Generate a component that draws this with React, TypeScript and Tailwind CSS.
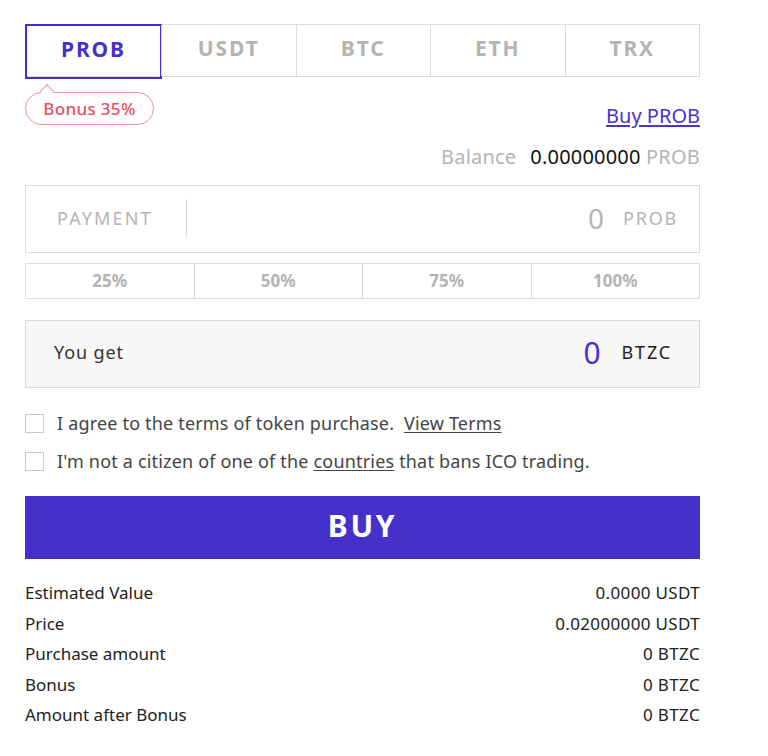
const tabs = ["PROB", "USDT", "BTC", "ETH", "TRX"];
const percents = ["25%", "50%", "75%", "100%"];
const stats: [string, string][] = [
  ["Estimated Value", "0.0000 USDT"],
  ["Price", "0.02000000 USDT"],
  ["Purchase amount", "0 BTZC"],
  ["Bonus", "0 BTZC"],
  ["Amount after Bonus", "0 BTZC"],
];

function Checkbox() {
  return <span className="h-[19px] w-[19px] shrink-0 border border-[#c8c8c8] bg-white" />;
}

export default function App() {
  return (
    <div className="min-h-[756px] bg-white font-['Noto_Sans',sans-serif]">
      <div className="ml-[25px] w-[675px] pt-[24px]">
        {/* currency tabs */}
        <div className="flex h-[53px] border border-[#dcdcdc]">
          {tabs.map((t, i) =>
            i === 0 ? (
              <div
                key={t}
                className="-m-px flex h-[55px] w-[137px] items-center justify-center border-2 border-[#4431ca] pb-[3px] text-[21px] font-bold tracking-[0.09em] text-[#4431ca]"
              >
                {t}
              </div>
            ) : (
              <div
                key={t}
                className="flex flex-1 items-center justify-center border-l border-[#dcdcdc] pb-[3px] text-[21px] font-bold tracking-[0.09em] text-[#b4b4b4] first:border-l-0"
              >
                {t}
              </div>
            )
          )}
        </div>

        <div className="flex items-start justify-between">
          <div className="relative mt-[15px]">
            <span className="absolute left-[17px] top-[-6px] h-[10px] w-[10px] rotate-45 border-l-[1.5px] border-t-[1.5px] border-[#f4909c] bg-white" />
            <div className="flex h-[33px] w-[129px] items-center justify-center rounded-full border-[1.5px] border-[#f4909c] bg-white text-[17px] font-medium tracking-[0.02em] text-[#ec4d5d]">
              <span className="relative">Bonus 35%</span>
            </div>
          </div>
          <a className="mt-[26px] text-[20px] leading-[26px] text-[#4a31d0] underline underline-offset-2">Buy PROB</a>
        </div>

        <div className="mt-[15px] flex items-center justify-end gap-[14px] text-[20px] leading-[26px] tracking-[0.01em]">
          <span className="text-[#b4b4b4]">Balance</span>
          <span>
            <span className="text-[#111]">0.00000000</span> <span className="text-[#b4b4b4]">PROB</span>
          </span>
        </div>

        {/* payment */}
        <div className="mt-[15px] flex h-[68px] items-center border border-[#dcdcdc] pb-[2px] pl-[31px] pr-[21px]">
          <span className="text-[18px] tracking-[0.12em] text-[#b4b4b4]">PAYMENT</span>
          <span className="ml-[33px] h-[38px] w-px bg-[#dcdcdc]" />
          <span className="ml-auto text-[28px] leading-none text-[#b4b4b4]">0</span>
          <span className="ml-[19px] text-[18px] tracking-[0.1em] text-[#b4b4b4]">PROB</span>
        </div>

        <div className="mt-[10px] flex h-[36px] border border-[#dcdcdc]">
          {percents.map((p) => (
            <div
              key={p}
              className="flex flex-1 items-center justify-center border-l border-[#dcdcdc] text-[17px] font-bold text-[#b4b4b4] first:border-l-0"
            >
              {p}
            </div>
          ))}
        </div>

        {/* you get */}
        <div className="mt-[21px] flex h-[68px] items-center border border-[#dcdcdc] bg-[#f7f7f7] pb-[3px] pl-[28px] pr-[27px]">
          <span className="text-[18px] tracking-[0.05em] text-[#333]">You get</span>
          <span className="ml-auto text-[30px] leading-none text-[#4a31d0]">0</span>
          <span className="ml-[21px] text-[18px] tracking-[0.1em] text-[#222]">BTZC</span>
        </div>

        {/* terms */}
        <div className="mt-[25px] flex flex-col gap-[18px] text-[18px] leading-[20px] tracking-[0.01em] text-[#444]">
          <label className="flex items-center gap-[13px]">
            <Checkbox />
            <span>
              I agree to the terms of token purchase.&nbsp; <a className="underline underline-offset-2">View Terms</a>
            </span>
          </label>
          <label className="flex items-center gap-[13px]">
            <Checkbox />
            <span>
              I'm not a citizen of one of the <a className="underline underline-offset-2">countries</a> that bans ICO trading.
            </span>
          </label>
        </div>

        <button className="mt-[25px] flex h-[63px] w-full items-center justify-center bg-[#4531c9] pb-[5px] text-[30px] font-bold tracking-[0.09em] text-white">
          BUY
        </button>

        <div className="mt-[19px] flex flex-col text-[17px] leading-[30.5px] text-[#222]">
          {stats.map(([k, v]) => (
            <div key={k} className="flex justify-between">
              <span>{k}</span>
              <span className="tracking-[0.02em]">{v}</span>
            </div>
          ))}
        </div>
      </div>
    </div>
  );
}
